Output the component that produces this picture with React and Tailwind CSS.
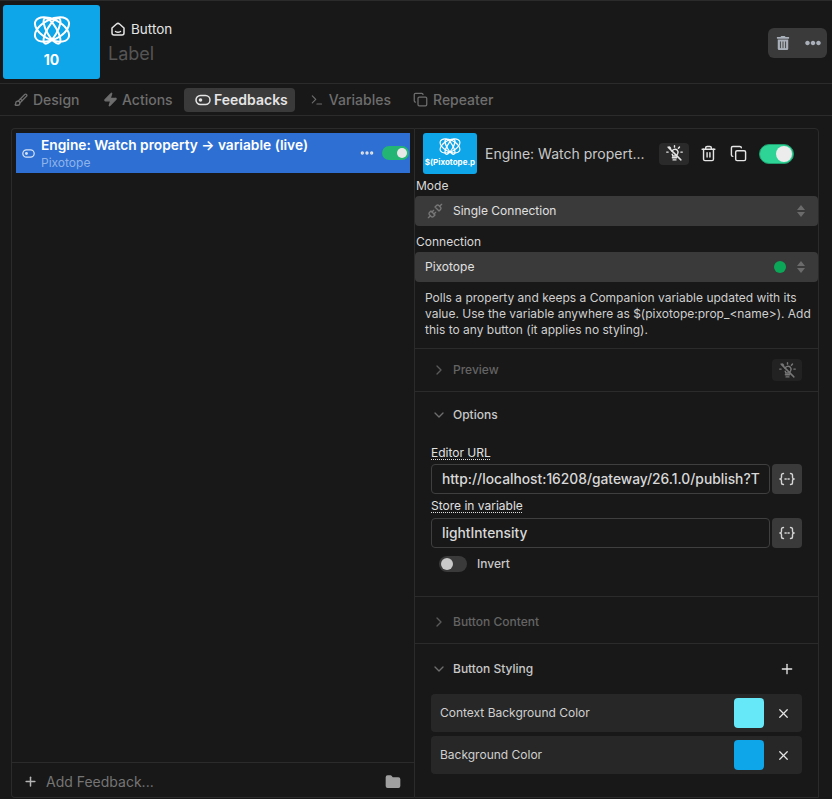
import React from 'react';
import { Plus, X, ChevronRight, ChevronDown, Copy, Trash2, Terminal, Folder, Ellipsis, Unplug, Zap, Brush } from 'lucide-react';
import { FaTrashAlt, FaEllipsisH } from 'react-icons/fa';

function Logo({ size = 38 }) {
    return (
        <svg width={size} height={size * 0.84} viewBox="0 0 38 32" fill="none" stroke="white" strokeWidth="2">
            <ellipse cx="19" cy="15.500" rx="18.500" ry="10" transform="rotate(27 19 15.500)" />
            <ellipse cx="19" cy="15.500" rx="18.500" ry="10" transform="rotate(-27 19 15.500)" />
            <ellipse cx="19" cy="17" rx="14.500" ry="5" transform="rotate(60 19 17)" />
            <ellipse cx="19" cy="17" rx="14.500" ry="5" transform="rotate(-60 19 17)" />
        </svg>
    );
}

function BulbOff({ size = 18, className }) {
    return (
        <svg width={size} height={size} viewBox="0 0 24 24" fill="none" stroke="currentColor" strokeWidth="2" strokeLinecap="round" className={className}>
            <path d="M9 18h6M10 21h4" />
            <path d="M8.500 9a4.500 4.500 0 0 1 7.500-1.500c1.200 1.400 1.300 3.400.3 5-.6.9-1.300 1.500-1.300 3H9.500c0-1-.3-1.800-.8-2.500" />
            <path d="M12 1v2M3 10H1M23 10h-2M5 3l1.500 1.500M19 3l-1.500 1.500" />
            <path d="M3 3l18 18" />
        </svg>
    );
}

function ToggleIcon({ className }) {
    return (
        <svg width="16" height="16" viewBox="0 0 16 16" fill="none" stroke="currentColor" strokeWidth="1.500" className={`shrink-0 ${className}`}>
            <rect x="1" y="3.500" width="14" height="9" rx="4.500" />
            <circle cx="5.500" cy="8" r="1.800" fill="currentColor" stroke="none" />
        </svg>
    );
}

function HomeIcon() {
    return (
        <svg width="16" height="16" viewBox="0 0 16 16" fill="none" stroke="#e5e5e5" strokeWidth="1.500" strokeLinecap="round" strokeLinejoin="round">
            <path d="M2 7l4.500-4a2.300 2.300 0 0 1 3 0L14 7v5a2 2 0 0 1-2 2H4a2 2 0 0 1-2-2z" />
            <path d="M5.500 10.500c1.500 1 3.500 1 5 0" />
        </svg>
    );
}

function VarIcon() {
    return (
        <svg width="16" height="16" viewBox="0 0 16 16" fill="none" stroke="#d4d4d4" strokeWidth="1.400" strokeLinecap="round">
            <path d="M4.500 2.500c-1.500 0-2 .6-2 1.800v1.900c0 1-.5 1.500-1.300 1.800.8.300 1.300.8 1.300 1.800v1.900c0 1.200.5 1.800 2 1.800" />
            <path d="M11.500 2.500c1.500 0 2 .6 2 1.800v1.900c0 1 .5 1.500 1.300 1.800-.8.300-1.300.8-1.300 1.800v1.900c0 1.200-.5 1.800-2 1.800" />
            <path d="M6 8h1.200M9 8h1.200" />
        </svg>
    );
}

function UpDown() {
    return (
        <svg width="8" height="12" viewBox="0 0 8 12" fill="#6b6b6b">
            <path d="M4 0l4 5H0zM4 12l4-5H0z" />
        </svg>
    );
}

function Tab({ icon, label, active, className }) {
    return (
        <div className={`h-[24px] shrink-0 flex items-center rounded-[4px] text-[14px] font-medium ${active ? 'bg-[#3a3a3a] text-[#e5e5e5] font-semibold' : 'text-[#6e6e6e]'} ${className}`}>
            {icon}
            <span>{label}</span>
        </div>
    );
}

function Section({ open, title, dim, right, topGap, className, children }) {
    return (
        <div className={`border-t border-[#2b2b2b] ${className}`}>
            <div className={`h-[42px] flex items-center pl-[16px] pr-[16px] ${topGap}`}>
                {open
                    ? <ChevronDown size={16} className="text-[#6e6e6e]" />
                    : <ChevronRight size={16} className="text-[#5a5a5a]" />}
                <span className={`ml-[6px] text-[12px] font-medium ${dim ? 'text-[#646464]' : 'text-[#c8c8c8]'}`}>{title}</span>
                <div className="ml-auto flex items-center">{right}</div>
            </div>
            {children}
        </div>
    );
}

function FieldInput({ value }) {
    return (
        <div className="flex gap-[2px] h-[30px]">
            <div className="w-[339px] border border-[#3f3f3f] rounded-[4px] flex items-center pl-[10px] pr-[8px] text-[13.800px] font-medium text-[#d8d8d8] overflow-hidden whitespace-nowrap">{value}</div>
            <div className="w-[30px] bg-[#3a3a3a] rounded-[4px] flex items-center justify-center"><VarIcon /></div>
        </div>
    );
}

function StyleRow({ label, color }) {
    return (
        <div className="h-[38px] bg-[#272727] rounded-[4px] flex items-center pl-[9px] text-[12px] text-[#d0d0d0]">
            <span>{label}</span>
            <div className={`ml-auto w-[30px] h-[30px] rounded-[4px] ${color}`}></div>
            <div className="w-[38px] flex justify-center"><X size={15} className="text-[#e5e5e5]" /></div>
        </div>
    );
}

export default function App() {
    return (
        <div className="w-[832px] h-[799px] overflow-hidden bg-[#181818] border-t border-[#2b2b2b] flex flex-col" style={{ fontFamily: 'Inter, "Liberation Sans", sans-serif' }}>
            {/* header */}
            <div className="h-[83px] shrink-0 flex items-center pl-[3px] pr-[5px] border-b border-[#2b2b2b]">
                <div className="w-[97px] h-[74px] -mt-[1px] bg-[#0ea5e9] rounded-[3px] flex flex-col items-center pt-[9px]">
                    <Logo />
                    <span className="text-white font-bold text-[14px] leading-[17px] mt-[6px]">10</span>
                </div>
                <div className="ml-[8px] mt-[2px]">
                    <div className="flex items-center gap-[5px] pl-[2px] text-[13.500px] text-[#e5e5e5] leading-[20px]">
                        <HomeIcon />
                        <span>Button</span>
                    </div>
                    <div className="text-[18px] text-[#555555] leading-[26px] mt-[2px]">Label</div>
                </div>
                <div className="ml-auto mt-[1px] w-[59px] h-[30px] bg-[#3a3a3a] rounded-[6px] flex items-center pl-[8px] gap-[15px] text-[#aab0ba]">
                    <FaTrashAlt size={14} />
                    <FaEllipsisH size={16} />
                </div>
            </div>

            {/* tabs */}
            <div className="h-[32px] shrink-0 flex items-center pl-[14px] border-b border-[#2b2b2b]">
                <Tab icon={<Brush size={14} strokeWidth={2.200} />} label="Design" className="w-[66px] gap-[5px]" />
                <Tab icon={<Zap size={15} fill="currentColor" />} label="Actions" className="ml-[23px] w-[81px] gap-[4px]" />
                <Tab active icon={<ToggleIcon />} label="Feedbacks" className="pl-[11px] w-[111px] gap-[3px]" />
                <Tab icon={<Terminal size={14} />} label="Variables" className="ml-[15px] w-[81px] gap-[5px]" />
                <Tab icon={<Copy size={15} />} label="Repeater" className="ml-[22px] w-[81px] gap-[5px]" />
            </div>

            {/* body */}
            <div className="flex-1 min-h-0 flex pl-[11px] pr-[13px] pt-[12px] pb-[1px]">
                {/* feedback list */}
                <div className="w-[403px] shrink-0 border border-r-0 border-[#2b2b2b] rounded-tl-[4px] rounded-bl-[4px] flex flex-col">
                    <div className="flex-1 pl-[4px] pr-[4px] pt-[4px]">
                        <div className="h-[40px] bg-[#2d6fd2] flex items-center pl-[6px] pr-[1px]">
                            <ToggleIcon className="text-[#d8e4f8] w-[13px] h-[13px]" />
                            <div className="ml-[6px]">
                                <div className="text-[13.750px] font-semibold leading-[18px] text-white">Engine: Watch property → variable (live)</div>
                                <div className="text-[12px] leading-[16px] mt-[1px] text-[#90b4ea]">Pixotope</div>
                            </div>
                            <Ellipsis size={16} strokeWidth={3} className="ml-auto text-[#e5e5e5]" />
                            <div className="ml-[7px] w-[27px] h-[14px] rounded-full bg-[#22b573] flex items-center justify-end pr-[2px]">
                                <div className="w-[10px] h-[10px] rounded-full bg-[#e8e8e8]"></div>
                            </div>
                        </div>
                    </div>
                    <div className="h-[35px] shrink-0 border-t border-[#2b2b2b] flex items-center pl-[11px] pr-[13px] pt-[3px]">
                        <Plus size={15} className="text-[#b5b5b5]" strokeWidth={2.400} />
                        <span className="ml-[8px] text-[14px] text-[#757575]">Add Feedback...</span>
                        <Folder size={16} className="ml-auto text-[#a0a0a0]" fill="currentColor" />
                    </div>
                </div>

                {/* feedback editor */}
                <div className="w-[405px] shrink-0 border border-[#2b2b2b] rounded-tr-[4px] flex flex-col">
                    <div className="flex items-center h-[45px] pl-[8px] pt-[4px]">
                        <div className="w-[54px] h-[41px] bg-[#0ea5e9] rounded-[3px] flex flex-col items-center pt-[4px] overflow-hidden">
                            <Logo size={22} />
                            <span className="text-white font-bold text-[8px] leading-[10px] mt-[2px] whitespace-nowrap">$(Pixotope.p</span>
                        </div>
                        <span className="ml-[8px] w-[174px] whitespace-nowrap text-[14px] text-[#c8c8c8]">Engine: Watch propert...</span>
                        <div className="w-[30px] h-[22px] bg-[#2a2a2a] rounded-[4px] flex items-center justify-center text-[#e5e5e5]"><BulbOff size={17} /></div>
                        <Trash2 size={17} className="ml-[11px] text-[#e5e5e5]" />
                        <Copy size={17} className="ml-[13px] text-[#e5e5e5]" />
                        <div className="ml-[12px] w-[35px] h-[20px] rounded-full bg-[#2dd496] flex items-center justify-end pr-[1px] border border-[#1f9d6e]">
                            <div className="w-[16px] h-[16px] rounded-full bg-[#ececec]"></div>
                        </div>
                    </div>
                    <div className="text-[12px] leading-[16px] text-[#d8d8d8] pl-[1px] mt-[4px] mb-[2px]">Mode</div>
                    <div className="h-[30px] bg-[#3a3a3a] rounded-[4px] flex items-center pl-[12px] pr-[13px] text-[12px] text-[#e0e0e0]">
                        <Unplug size={16} className="text-[#777777]" />
                        <span className="ml-[10px]">Single Connection</span>
                        <div className="ml-auto"><UpDown /></div>
                    </div>
                    <div className="text-[12px] leading-[16px] text-[#d8d8d8] pl-[1px] mt-[8px] mb-[2px]">Connection</div>
                    <div className="h-[30px] bg-[#3a3a3a] rounded-[4px] flex items-center pl-[10px] pr-[13px] text-[12px] text-[#e0e0e0]">
                        <span>Pixotope</span>
                        <div className="ml-auto w-[12px] h-[12px] rounded-full bg-[#0ca658]"></div>
                        <div className="ml-[11px]"><UpDown /></div>
                    </div>
                    <div className="pl-[10px] pr-[2px] pt-[8px] pb-[10px] text-[12px] leading-[16px] text-[#cfcfcf]">
                        Polls a property and keeps a Companion variable updated with its value. Use the variable anywhere as $(pixotope:prop_&lt;name&gt;). Add this to any button (it applies no styling).
                    </div>

                    <Section title="Preview" dim right={
                        <div className="w-[30px] h-[22px] bg-[#222222] rounded-[4px] flex items-center justify-center text-[#777777]"><BulbOff size={17} /></div>
                    } />

                    <Section open title="Options" topGap="mt-[2px]" className="h-[205px]">
                        <div className="pl-[16px] pt-[9px]">
                            <div className="text-[12px] leading-[16px] mb-[3px] text-[#e0e0e0]"><span className="underline decoration-dotted underline-offset-2">Editor URL</span></div>
                            <FieldInput value="http://localhost:16208/gateway/26.1.0/publish?T" />
                            <div className="text-[12px] leading-[16px] mt-[4px] mb-[4px] text-[#e0e0e0]"><span className="underline decoration-dotted underline-offset-2">Store in variable</span></div>
                            <FieldInput value="lightIntensity" />
                            <div className="flex items-center mt-[7px] pl-[8px]">
                                <div className="w-[28px] h-[16px] rounded-full bg-[#3a3a3a] flex items-center pl-[2px]">
                                    <div className="w-[12px] h-[12px] rounded-full bg-[#c9c9c9]"></div>
                                </div>
                                <span className="ml-[10px] text-[12px] font-medium text-[#c8c8c8]">Invert</span>
                            </div>
                        </div>
                    </Section>

                    <Section title="Button Content" dim topGap="mt-[4px]" className="h-[47px]" />

                    <Section open title="Button Styling" topGap="mt-[4px]" right={<div className="w-[30px] flex justify-center"><Plus size={16} className="text-[#e5e5e5]" /></div>}>
                        <div className="pl-[16px] pr-[16px] pt-[4px] flex flex-col gap-[4px]">
                            <StyleRow label="Context Background Color" color="bg-[#67e8f9]" />
                            <StyleRow label="Background Color" color="bg-[#0ea5e9]" />
                        </div>
                    </Section>
                </div>
            </div>
        </div>
    );
}
